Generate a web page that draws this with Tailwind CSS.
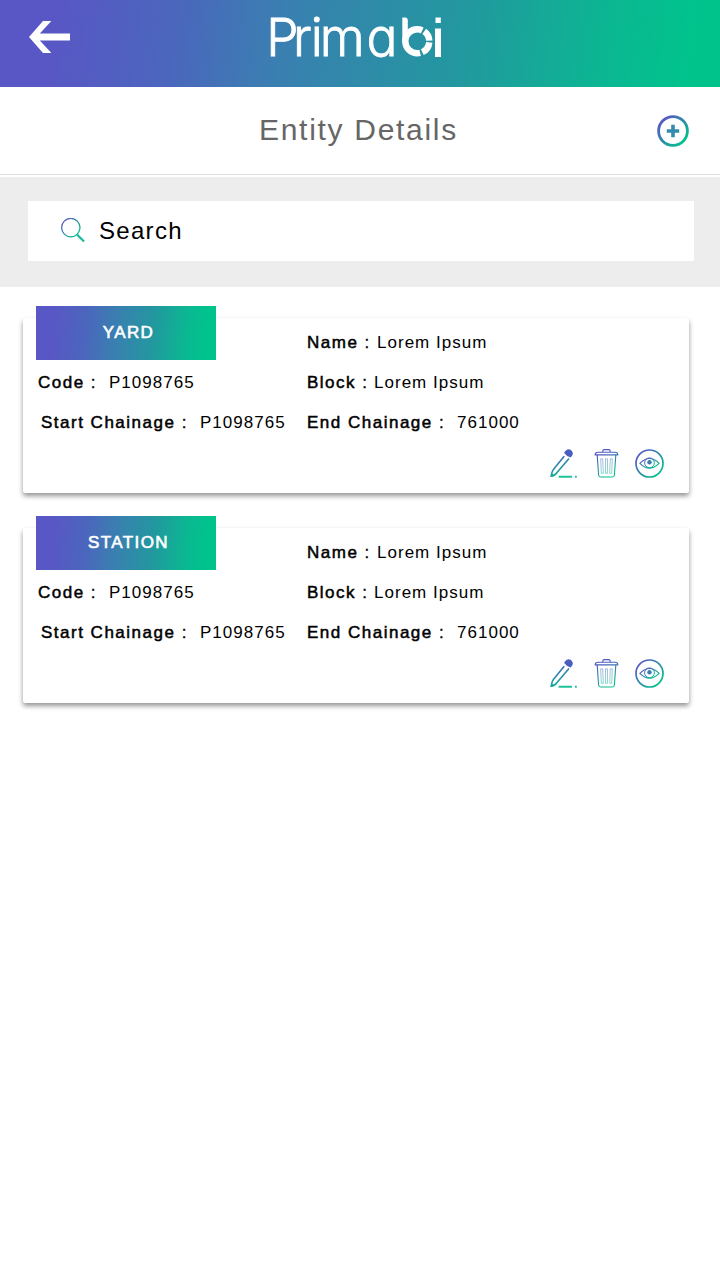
<!DOCTYPE html>
<html lang="en">
<head>
<meta charset="utf-8">
<title>Entity Details</title>
<script src="https://cdn.jsdelivr.net/npm/@tailwindcss/browser@4"></script>
</head>
<body class="bg-white text-black font-['Liberation_Sans',Arial,sans-serif] min-h-[1280px]">
<svg class="absolute w-0 h-0" aria-hidden="true">
  <defs>
    <linearGradient id="g" x1="0" y1="0" x2="1" y2="1"><stop offset=".1" stop-color="#5956c5"/><stop offset=".9" stop-color="#00c48c"/></linearGradient>
    <linearGradient id="gp" gradientUnits="userSpaceOnUse" x1="8" y1="0" x2="22" y2="30"><stop offset=".15" stop-color="#5058c0"/><stop offset=".9" stop-color="#00c48c"/></linearGradient>
    <g id="pencil" fill="none" stroke="url(#gp)">
      <path d="M14.2 8.3 3.4 21.4Q1.7 24 1.2 28.2Q4.6 28 6.6 25L19 10.6" stroke-width="1.6"/>
      <path d="M.8 28.8 1.8 25.3 4.4 27Z" fill="#19a99b" stroke="none"/>
      <path d="M14.6 3.9Q17 0 20.6 1.8Q24 4.6 22.2 7.6L20.7 9.4Q16.6 8.6 14.2 5Z" fill="#4a5ec0" stroke="none"/>
      <path d="M8.6 28.8H22M25 28.8H26.8" stroke="#1cc39b" stroke-width="1.9"/>
    </g>
    <g id="trash" fill="none" stroke="url(#gp)" stroke-width="1.1">
      <path d="M1.2 6.9Q1.2 4.3 4 4.3H21Q23.8 4.3 23.8 6.9ZM8.8 4.3V3Q8.8 1.6 10.1 1.6H14.9Q16.2 1.6 16.2 3V4.3M3.2 7.1 4.6 27Q4.8 29 6.8 29H18.2Q20.2 29 20.4 27L21.8 7.1"/>
      <path d="M6.7 10.8H8.7L9.3 25.3H7.3ZM11.5 10.8H13.5V25.3H11.5ZM16.3 10.8H18.3L17.7 25.3H15.7Z" stroke-width=".8" opacity=".6"/>
    </g>
    <g id="eye" fill="none" stroke="url(#g)">
      <circle cx="14.5" cy="15.5" r="13.5" stroke-width="1.7"/>
      <path d="M4.9 15.3Q14.5 5.6 24.1 15.3Q14.5 24.9 4.9 15.3Z" stroke-width="1.1"/>
      <circle cx="14.5" cy="14.8" r="4.9" stroke-width="1"/>
      <circle cx="14.5" cy="14.2" r="2.2" fill="#3a7fb2" stroke="none"/>
    </g>
  </defs>
</svg>

<header class="h-[87px] flex items-start bg-[linear-gradient(97deg,#5956c5_7%,#4b66bd_24%,#3a7fb1_39%,#22989f_64%,#0bb792_84%,#00c38c_96%)]">
  <svg class="ml-[29px] mt-[21px]" width="41" height="32" viewBox="0 0 41 32" fill="#fff"><path d="M14 0H22.4L10.8 12.5H41V19.5H10.8L22.4 32H14L0 16Z"/></svg>
  <svg class="ml-[190px] overflow-visible" width="190" height="80" viewBox="260 0 190 80" fill="#fff">
    <text transform="scale(.98 1)" x="271.8 298.9 317.2 326.3 374" y="56.4" font-family="Inter, Lato, sans-serif" font-weight="300" font-size="52.5" stroke="#fff" stroke-width=".8" class="[font-feature-settings:'cv11']">Prima</text>
    <path d="M402.3 17.5H405Q407.8 17.5 407.8 20.5V30L406.5 42H402.3Z"/>
    <circle cx="417.3" cy="41.3" r="12" fill="none" stroke="#fff" stroke-width="6.4" stroke-dasharray="0 1.1 12.5 2.2 45.5 2.2 10.8 1.1"/>
    <path d="M435 28.5H441V57H435ZM435.5 17.5H440.8V23H435.5Z"/>
  </svg>
</header>

<div class="h-[88px] border-b border-[#e2e2e2] flex items-start">
  <h1 class="ml-[259px] w-[398px] mt-[23px] text-[30px] leading-[40px] tracking-[1.7px] text-[#666]">Entity Details</h1>
  <svg class="mt-[28px]" width="32" height="32" viewBox="0 0 32 32" fill="none"><circle cx="16" cy="16" r="14.4" stroke="url(#g)" stroke-width="2.8"/><path d="M16 9.8V22.2M9.8 16H22.2" stroke="#348bad" stroke-width="3.6"/></svg>
</div>

<div class="mt-[2px] h-[110px] bg-[#ededed] pt-6 pl-7 pr-[26px]">
  <div class="h-[60px] bg-white flex items-center pl-8">
    <svg width="26" height="26" viewBox="0 0 26 26" fill="none" stroke="url(#g)"><circle cx="10.8" cy="9.6" r="9.2" stroke-width="1.3"/><path d="M17 16.6 24 23.6" stroke="#15b896" stroke-width="2.1"/></svg>
    <span class="ml-[13px] text-[24px] leading-[30px] tracking-[1.3px]">Search</span>
  </div>
</div>

<main class="pt-[31px] pl-[23px] pr-[31px] flex flex-col gap-[35px] text-[17px] leading-[40px] tracking-[1.02px] whitespace-pre">
<section class="relative h-[175px] rounded-[2px] bg-white shadow-[0_3px_5px_rgba(0,0,0,0.42)] pt-[5px]"><h2 class="absolute left-[13px] top-[-12px] w-[180px] h-[54px] pl-[5px] flex items-center justify-center text-white tracking-[1.4px] [-webkit-text-stroke:0.6px] bg-[linear-gradient(95deg,#5956c5_9%,#4b66bd_28%,#3a7fb1_44%,#22989f_65%,#0bb792_82%,#00c38c_94%)]">YARD</h2><div class="grid grid-cols-[269px_1fr] grid-rows-[40px_40px_40px] pl-[15px]"><div></div><div class="flex"><span class="w-[70px] tracking-[1.5px] [-webkit-text-stroke:0.3px]"><b class="font-normal [-webkit-text-stroke:0.5px]">Name</b> :</span><span>Lorem Ipsum</span></div><div class="flex"><span class="w-[71px] tracking-[1.5px] [-webkit-text-stroke:0.3px]"><b class="font-normal [-webkit-text-stroke:0.5px]">Code</b> :</span><span>P1098765</span></div><div class="flex"><span class="w-[67px] tracking-[1.5px] [-webkit-text-stroke:0.3px]"><b class="font-normal [-webkit-text-stroke:0.5px]">Block</b> :</span><span>Lorem Ipsum</span></div><div class="flex pl-[3px]"><span class="w-[159px] tracking-[1.5px] [-webkit-text-stroke:0.3px]"><b class="font-normal [-webkit-text-stroke:0.5px]">Start Chainage</b> :</span><span>P1098765</span></div><div class="flex"><span class="w-[150px] tracking-[1.5px] [-webkit-text-stroke:0.3px]"><b class="font-normal [-webkit-text-stroke:0.5px]">End Chainage</b> :</span><span>761000</span></div></div><div class="flex justify-end pr-[24px] mt-[5px]"><svg class="mr-[16px]" width="28" height="30"><use href="#pencil"/></svg><svg class="mr-[15px]" width="26" height="30"><use href="#trash"/></svg><svg width="30" height="30"><use href="#eye"/></svg></div></section>
<section class="relative h-[175px] rounded-[2px] bg-white shadow-[0_3px_5px_rgba(0,0,0,0.42)] pt-[5px]"><h2 class="absolute left-[13px] top-[-12px] w-[180px] h-[54px] pl-[5px] flex items-center justify-center text-white tracking-[1.4px] [-webkit-text-stroke:0.6px] bg-[linear-gradient(95deg,#5956c5_9%,#4b66bd_28%,#3a7fb1_44%,#22989f_65%,#0bb792_82%,#00c38c_94%)]">STATION</h2><div class="grid grid-cols-[269px_1fr] grid-rows-[40px_40px_40px] pl-[15px]"><div></div><div class="flex"><span class="w-[70px] tracking-[1.5px] [-webkit-text-stroke:0.3px]"><b class="font-normal [-webkit-text-stroke:0.5px]">Name</b> :</span><span>Lorem Ipsum</span></div><div class="flex"><span class="w-[71px] tracking-[1.5px] [-webkit-text-stroke:0.3px]"><b class="font-normal [-webkit-text-stroke:0.5px]">Code</b> :</span><span>P1098765</span></div><div class="flex"><span class="w-[67px] tracking-[1.5px] [-webkit-text-stroke:0.3px]"><b class="font-normal [-webkit-text-stroke:0.5px]">Block</b> :</span><span>Lorem Ipsum</span></div><div class="flex pl-[3px]"><span class="w-[159px] tracking-[1.5px] [-webkit-text-stroke:0.3px]"><b class="font-normal [-webkit-text-stroke:0.5px]">Start Chainage</b> :</span><span>P1098765</span></div><div class="flex"><span class="w-[150px] tracking-[1.5px] [-webkit-text-stroke:0.3px]"><b class="font-normal [-webkit-text-stroke:0.5px]">End Chainage</b> :</span><span>761000</span></div></div><div class="flex justify-end pr-[24px] mt-[5px]"><svg class="mr-[16px]" width="28" height="30"><use href="#pencil"/></svg><svg class="mr-[15px]" width="26" height="30"><use href="#trash"/></svg><svg width="30" height="30"><use href="#eye"/></svg></div></section>
</main>
</body>
</html>
